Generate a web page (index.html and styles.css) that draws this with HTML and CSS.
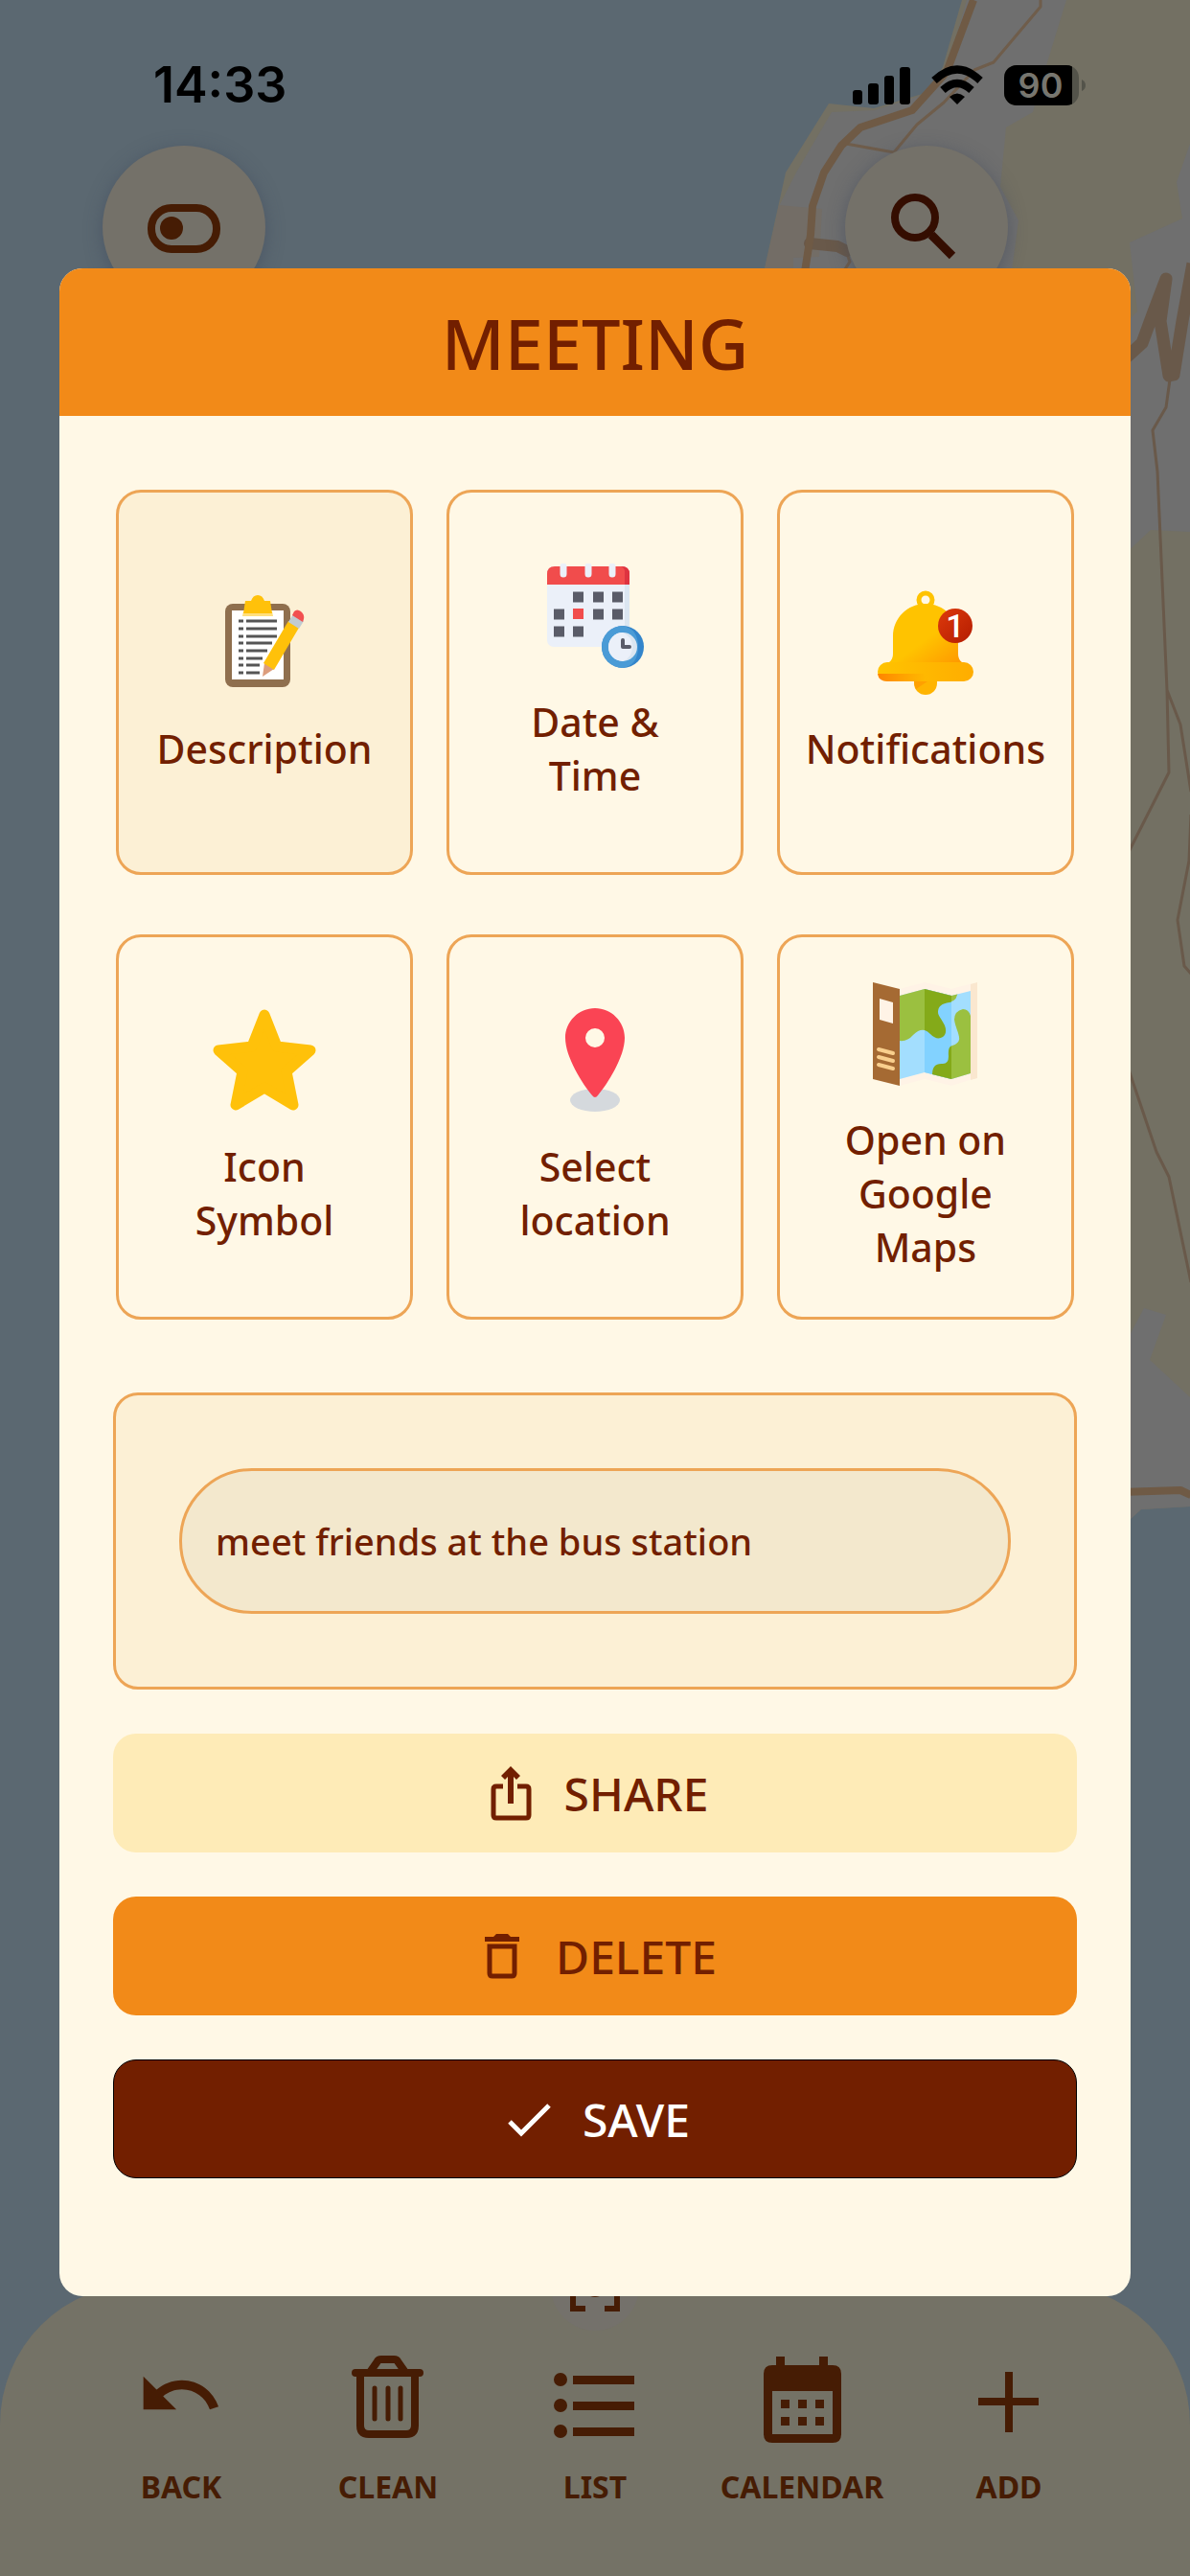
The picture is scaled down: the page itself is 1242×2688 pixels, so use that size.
FILE: index.html
```html
<!DOCTYPE html>
<html lang="en">
<head>
<meta charset="utf-8">
<meta name="viewport" content="width=device-width, initial-scale=1">
<title>Meeting</title>
<link rel="stylesheet" href="styles.css">
</head>
<body>
<div class="screen">
  <svg class="map" viewBox="0 0 1242 2688" preserveAspectRatio="xMaxYMin slice" aria-hidden="true">
    <path fill="#737063" d="M1004 0L984 70 966 97 912 113 865 108 820 180 798 280 700 700 1100 1650 1180 1585 1191 1575 1242 1572V0z"/>
    <path fill="#6f6f6f" d="M1009 0L988 72 966 98 913 115 868 117 831 180 813 215 798 290 700 700 1100 1650 1180 1585 1191 1575 1242 1572V0z"/>
    <path fill="#736d66" d="M813 214L858 218 855 268 828 269V290H796z"/>
    <path fill="#737063" d="M1113 0L1093 65 1078 117 1050 133 1044 195 1063 230 1055 290 1180 332 1187 325 1179 253 1234 228 1228 190 1242 150V0z"/>
    <path fill="#737063" d="M1170 582L1201 553 1242 555V1458L1200 1419 1217 1372 1194 1365 1170 1410z"/>
    <g fill="none" stroke-linejoin="round">
      <g stroke="#6f5d4b" stroke-width="3">
        <path d="M1086 0V7L1037 65 1017 73 985 107 957 130 933 159 883 150"/>
        <path d="M883 262L887 273 880 284"/>
        <path stroke="#69594a" d="M1221 396L1217 425 1203 449 1208 492 1218 720 1220 806 1178 889M1218 720L1232 756 1243 826M1243 850L1241 898 1229 960 1236 1008 1243 1016M1178 1116L1207 1202 1220 1228 1243 1338"/>
      </g>
      <g stroke="#69594a">
        <path stroke-width="12" stroke-linecap="round" d="M845 254L874 257 884 262"/>
        <path stroke-width="13" d="M1170 378L1192 358 1203 328 1217 291 1211 335 1220 392 1225 391 1234 335 1245 275"/>
      </g>
      <g stroke="#6f5a45" stroke-width="8">
        <path d="M1016 0L988 75 952 115 898 133 878 152 860 180 848 215 846 245 839 290"/>
        <path d="M1170 1557L1232 1555 1243 1560"/>
      </g>
    </g>
  </svg>

  <header class="status-bar">
    <time class="clock">14:33</time>
    <div class="status-icons">
      <svg width="60" height="44" viewBox="0 0 60 44" aria-hidden="true">
        <rect x="0" y="27" width="10" height="15" rx="3"/><rect x="16" y="20" width="11" height="22" rx="3"/><rect x="33" y="12" width="10" height="30" rx="3"/><rect x="49" y="3" width="11" height="39" rx="3"/>
      </svg>
      <svg width="54" height="44" viewBox="0 0 54 44" aria-hidden="true">
        <g fill="none" stroke="#000" stroke-width="8"><path d="M3 17Q27 -6 51 17"/><path d="M12 27Q27 13 42 27"/></g>
        <path d="M19 34Q27 27 35 34L27 42z"/>
      </svg>
      <svg width="86" height="44" viewBox="0 0 86 44" role="img" aria-label="Battery 90 percent">
        <clipPath id="charge"><path d="M0 0H71V44H0z"/></clipPath>
        <rect x="0" y="1" width="78" height="42" rx="13" fill="#53534a"/>
        <rect x="0" y="1" width="78" height="42" rx="13" clip-path="url(#charge)"/>
        <path d="M81 16Q85 18 85 22T81 28z" fill="#53534a"/>
        <text class="battery-text" x="38" y="35" text-anchor="middle">90</text>
      </svg>
    </div>
  </header>

  <div class="map-actions">
    <button class="round-button" type="button" aria-label="Toggle">
      <svg viewBox="0 0 170 170" aria-hidden="true">
        <rect x="51" y="65" width="68" height="43" rx="21" fill="none" stroke="#461c04" stroke-width="8"/>
        <circle cx="72" cy="86" r="12" fill="#461c04"/>
      </svg>
    </button>
    <button class="round-button" type="button" aria-label="Search">
      <svg viewBox="0 0 170 170" fill="none" stroke="#340d00" stroke-width="8" aria-hidden="true">
        <circle cx="73" cy="75" r="21"/><path stroke-width="9" d="M90 93L112 115"/><path stroke-width="5" d="M88 90L94 97"/>
      </svg>
    </button>
  </div>

  <nav class="tab-bar">
    <svg class="locate" viewBox="0 0 92 92" aria-hidden="true">
      <circle cx="46" cy="46" r="46" fill="#74716b"/>
      <circle cx="46" cy="46" r="11" fill="#461c04"/>
      <path fill="none" stroke="#461c04" stroke-width="6" d="M23 36V23H36M56 23H69V36M69 56V69H56M36 69H23V56"/>
    </svg>
    <a class="tab" href="#back">
      <svg viewBox="0 0 96 96" aria-hidden="true"><path transform="translate(1 -3) scale(3.83)" d="M12.500 8c-2.650 0-5.050.990-6.900 2.600L2 7v9h9l-3.620-3.620c1.390-1.160 3.160-1.880 5.120-1.880 3.540 0 6.550 2.310 7.600 5.500l2.370-.780C21.080 11.030 17.150 8 12.500 8z"/></svg>
      <span>BACK</span>
    </a>
    <a class="tab" href="#clean">
      <svg viewBox="0 0 96 96" aria-hidden="true"><g fill="none" stroke="#461c04" stroke-linecap="round" stroke-linejoin="round"><path stroke-width="8" d="M14 20H81M30 18L37 8Q38 6 41 6H54Q57 6 58 8L65 18M19 20V75Q19 84 28 84H67Q76 84 76 75V20"/><path stroke-width="5" d="M34 36V68M48 36V68M61 36V68"/></g></svg>
      <span>CLEAN</span>
    </a>
    <a class="tab" href="#list">
      <svg viewBox="0 0 96 96" aria-hidden="true"><circle cx="12" cy="27" r="7"/><circle cx="12" cy="54" r="7"/><circle cx="12" cy="81" r="7"/><path d="M25 23H89V32H25zM25 50H89V59H25zM25 77H89V86H25z"/></svg>
      <span>LIST</span>
    </a>
    <a class="tab" href="#calendar">
      <svg viewBox="0 0 96 96" aria-hidden="true"><path fill-rule="evenodd" d="M21 3H30V12H66V3H75V12H80Q89 12 89 21V84Q89 93 80 93H17Q8 93 8 84V21Q8 12 17 12H21zM17 39V84H80V39z"/><path d="M26 48H35V57H26zM44 48H53V57H44zM62 48H71V57H62zM26 66H35V75H26zM44 66H53V75H44zM62 66H71V75H62z"/></svg>
      <span>CALENDAR</span>
    </a>
    <a class="tab" href="#add">
      <svg viewBox="0 0 96 96" aria-hidden="true"><path d="M44 19H52V46H79V54H52V82H44V54H16V46H44z"/></svg>
      <span>ADD</span>
    </a>
  </nav>

  <div class="overlay">
    <section class="modal" role="dialog" aria-labelledby="modal-title">
      <header class="modal-header"><h1 id="modal-title">MEETING</h1></header>
      <div class="modal-body">
        <div class="card-grid">
          <button class="card card-selected" type="button">
            <svg viewBox="0 0 110 110" aria-hidden="true">
              <rect x="14" y="14" width="68" height="87" rx="8" fill="#8f6f4e"/>
              <path fill="#fff" d="M21 21H75V93H21z"/>
              <path fill="#ffdf7d" d="M33 22H63L64 27H32z"/>
              <path fill="#ffc10a" d="M35 11H41Q43 5 48 5T55 11H61L63 24H33z"/>
              <path stroke="#555" stroke-width="3" d="M28 32H33M36 32H68M28 40H33M36 40H68M28 48H33M36 48H68M28 55H33M36 55H63M28 63H33M36 63H58M28 71H33M36 71H53M28 78H33M36 78H50M28 86H33M36 86H50"/>
              <path fill="#dc9d7d" d="M55 76L65 82 53 90z"/>
              <path fill="#ffc10a" d="M54 76L80 32 91 39 65 83z"/>
              <path fill="#c1cbd1" d="M80 33L85 25 96 32 91 40z"/>
              <path fill="#f25050" d="M84 26L86 22Q89 19 93 22T96 30L95 33z"/>
            </svg>
            <span>Description</span>
          </button>
          <button class="card" type="button">
            <svg viewBox="0 0 110 110" aria-hidden="true">
              <rect x="5" y="3" width="86" height="84" rx="7" fill="#ebf0f9"/>
              <path fill="#dbe6f1" d="M86 20H91V66H86z"/>
              <path fill="#f14c4c" d="M5 22V11Q5 3 13 3H83Q91 3 91 11V22z"/>
              <path fill="#de3340" d="M82 3Q91 3 91 11V22H86V8Q86 5 82 3z"/>
              <path stroke="#ebf0f9" stroke-width="7" stroke-linecap="round" d="M22 3V11M48 3V11M73 3V11"/>
              <path fill="none" stroke="#5a5c68" stroke-width="11" d="M32 35H43M53 35H64M73 35H84M12 53H23M53 53H64M73 53H84M12 71H23M32 71H43"/>
              <path fill="#f14c4c" d="M32 47H43V58H32z"/>
              <circle cx="84" cy="87" r="22" fill="#3385cb"/>
              <path fill="#4a9bd6" d="M84 65A22 22 0 0 0 84 109Q100 106 100 87T84 65z"/>
              <circle cx="84" cy="87" r="15" fill="#dbe6f1"/>
              <path fill="#ebf0f9" d="M84 72A15 15 0 0 0 84 102Q94 98 94 87T84 72z"/>
              <path fill="none" stroke="#5a5c68" stroke-width="4" stroke-linejoin="round" stroke-linecap="round" d="M84 80V87H91"/>
            </svg>
            <span>Date &amp;<br>Time</span>
          </button>
          <button class="card" type="button">
            <svg viewBox="0 0 110 110" aria-hidden="true">
              <defs>
                <linearGradient id="bell" x1="0" y1="0" x2="1" y2="1"><stop offset=".55" stop-color="#ffc300"/><stop offset="1" stop-color="#ff9500"/></linearGradient>
                <linearGradient id="brim"><stop offset="0" stop-color="#ffc300"/><stop offset="1" stop-color="#ffad00"/></linearGradient>
                <linearGradient id="glow"><stop offset="0" stop-color="#ff8400"/><stop offset="1" stop-color="#ff8400" stop-opacity="0"/></linearGradient>
                <linearGradient id="badge" x1="0" y1="0" x2="1" y2="1"><stop offset="0" stop-color="#dd3a0c"/><stop offset="1" stop-color="#b41c00"/></linearGradient>
              </defs>
              <circle cx="55" cy="10" r="7" fill="none" stroke="#ffc300" stroke-width="5"/>
              <path fill="url(#bell)" d="M55 14C36 14 21 29 21 48V66C21 72 18 76 13 76H97C92 76 89 72 89 66V48C89 29 74 14 55 14z"/>
              <path fill="#ffb400" d="M43 94H67V97A12 12 0 0 1 43 97z"/><path fill="#ffa000" d="M43 95H57L45 103Q43 99 43 95z"/>
              <rect x="5" y="75" width="100" height="20" rx="10" fill="url(#brim)"/>
              <path fill="url(#glow)" d="M5 87H55V95H15Q6 95 5 87z"/>
              <circle cx="86" cy="37" r="18" fill="url(#badge)"/>
              <text class="badge-text" x="86" y="49" text-anchor="middle">1</text>
            </svg>
            <span>Notifications</span>
          </button>
          <button class="card" type="button">
            <svg viewBox="0 0 110 110" aria-hidden="true">
              <path fill="#ffc10a" stroke="#ffc10a" stroke-width="11" stroke-linejoin="round" d="M55 7L68 40 103 44 78 66 85 101 55 83 25 101 32 66 7 44 42 40z"/>
            </svg>
            <span>Icon<br>Symbol</span>
          </button>
          <button class="card" type="button">
            <svg viewBox="0 0 110 110" aria-hidden="true">
              <ellipse cx="55" cy="96" rx="26" ry="12" fill="#d5d9dd"/>
              <path fill="#fa4454" fill-rule="evenodd" d="M55 0C38 0 24 14 24 31C24 51 42 79 52 91Q55 95 58 91C68 79 86 51 86 31C86 14 72 0 55 0zM55 21A10 10 0 1 1 55 41A10 10 0 1 1 55 21z"/>
            </svg>
            <span>Select<br>location</span>
          </button>
          <button class="card" type="button">
            <svg viewBox="0 0 110 110" aria-hidden="true">
              <defs>
                <path id="land" d="M28 8V62Q36 63 42 56Q52 46 60 55Q67 62 73 58Q78 54 75 46C71 38 68 36 68 32C68 26 72 23 80 22Q89 20 89 8zM102 36Q100 29 94 29Q85 31 85 40C86 48 91 56 90 61Q89 65 83 67Q78 68 79 78Q79 86 73 86Q62 85 62 97V104H104z"/>
                <clipPath id="sheet"><path d="M28 15L54 8 82 15 102 10V96L82 102 54 95 28 102z"/></clipPath>
                <clipPath id="fold"><path d="M54 0H82V110H54z"/></clipPath>
              </defs>
              <path fill="#fff3e6" d="M28 8L54 1 82 8 104 2V102L82 109 54 102 28 109z"/>
              <path fill="#fae7cf" d="M102 3L109 1V101L102 103z"/>
              <g clip-path="url(#sheet)">
                <path fill="#a3defe" d="M28 0H102V110H28z"/><use href="#land" fill="#9bc040"/>
                <g clip-path="url(#fold)"><path fill="#82d2ff" d="M54 0H82V110H54z"/><use href="#land" fill="#84aa19"/></g>
              </g>
              <path fill="#a56a33" d="M0 1L28 8V109L0 102z"/>
              <path fill="#fff3e6" d="M7 18L21 22V44L7 40z"/>
              <path stroke="#f9cf8d" stroke-width="4" stroke-linecap="round" d="M6 71L21 75M6 79L21 83M6 87L21 91"/>
            </svg>
            <span>Open on<br>Google<br>Maps</span>
          </button>
        </div>

        <div class="panel">
          <input class="description" type="text" aria-label="Description" value="meet friends at the bus station">
        </div>

        <div class="actions">
          <button class="action action-share" type="button">
            <svg viewBox="0 0 60 60" aria-hidden="true"><path fill="none" stroke="currentColor" stroke-width="5" d="M22 23H15Q12 23 12 26V53Q12 56 15 56H46Q49 56 49 53V26Q49 23 46 23H37"/><path fill="currentColor" d="M30 2L40 12 36 16 33 13V41H27V13L24 16 20 12z"/></svg>
            <span>SHARE</span>
          </button>
          <button class="action action-delete" type="button">
            <svg viewBox="0 0 60 60" aria-hidden="true"><path fill="currentColor" d="M12 10H21L24 7H36L39 10H48V15H12z"/><path fill="none" stroke="currentColor" stroke-width="5" d="M17 20H43V48Q43 51 40 51H20Q17 51 17 48z"/></svg>
            <span>DELETE</span>
          </button>
          <button class="action action-save" type="button">
            <svg viewBox="0 0 60 60" aria-hidden="true"><path fill="none" stroke="currentColor" stroke-width="5" d="M10 33L22 45 51 16"/></svg>
            <span>SAVE</span>
          </button>
        </div>
      </div>
    </section>
  </div>
</div>
</body>
</html>
```

FILE: styles.css
```css
:root {
  --brown: #721f00;
  --brown-dim: #461c04;
  --orange: #f28a18;
  --line: #eda556;
  --cream: #fff8e6;
  --sand: #fcf0d5;
}

* {
  box-sizing: border-box;
}

body {
  margin: 0;
  font-family: "Noto Sans", "Open Sans", sans-serif;
}

button,
input {
  font: inherit;
  color: inherit;
}

button {
  border: 0;
  cursor: pointer;
}

svg {
  display: block;
  flex: none;
}

.screen {
  position: relative;
  display: flex;
  flex-direction: column;
  min-height: 100vh;
  overflow: hidden;
  background: #5b6871;
}

.map {
  position: absolute;
  inset: 0;
  width: 100%;
  height: 100%;
}

/* Status bar */
.status-bar {
  position: relative;
  display: flex;
  justify-content: space-between;
  align-items: center;
  padding: 67px 108px 41px 160px;
}

.clock {
  font: 600 52px/44px Inter, sans-serif;
}

.status-icons {
  display: flex;
  gap: 22px;
}

.battery-text {
  font: 600 36px Inter, sans-serif;
  fill: #77766f;
}

.badge-text {
  font: 500 34px Roboto, sans-serif;
  fill: #fff;
}

/* Round buttons on the map */
.map-actions {
  position: relative;
  display: flex;
  justify-content: space-between;
  padding: 0 190px 0 107px;
}

.round-button {
  width: 170px;
  height: 170px;
  padding: 0;
  border-radius: 50%;
  background: #747169;
  box-shadow: 0 4px 18px rgba(60, 70, 90, 0.5);
}

/* Bottom navigation */
.tab-bar {
  position: relative;
  display: grid;
  grid-template-columns: repeat(5, 1fr);
  margin-top: auto;
  padding: 73px 81px 71px;
  border-radius: 147px 147px 0 0;
  background: #747266;
}

.locate {
  position: absolute;
  top: -43px;
  left: 50%;
  width: 92px;
  margin-left: -46px;
}

.tab {
  display: flex;
  flex-direction: column;
  align-items: center;
  gap: 21px;
  color: var(--brown-dim);
  fill: var(--brown-dim);
  font-size: 32px;
  font-weight: 700;
  line-height: 44px;
  text-decoration: none;
}

.tab svg {
  width: 96px;
  height: 96px;
}

/* Dialog */
.overlay {
  position: absolute;
  inset: 0;
  display: flex;
  flex-direction: column;
  justify-content: center;
  padding: 0 5% 12px;
}

.modal {
  overflow: hidden;
  border-radius: 24px;
  background: var(--cream);
  color: var(--brown);
}

.modal-header {
  padding: 33px 56px 31px;
  background: var(--orange);
  text-align: center;
}

.modal-header h1 {
  margin: 0;
  font-size: 72px;
  font-weight: 500;
  line-height: 90px;
}

.modal-body {
  padding: 77px 56px 123px;
}

.card-grid {
  display: grid;
  grid-template-columns: repeat(3, 1fr);
  gap: 62px 35px;
  padding: 0 3px;
}

.card {
  display: flex;
  flex-direction: column;
  align-items: center;
  justify-content: center;
  gap: 27px;
  min-height: 402px;
  padding: 0;
  border: 3px solid var(--line);
  border-radius: 26px;
  background: transparent;
  font-size: 41px;
  font-weight: 500;
  line-height: 56px;
}

.card svg {
  width: 110px;
  height: 110px;
}

.card-selected {
  background: var(--sand);
}

.panel {
  margin-top: 76px;
  padding: 76px 66px;
  border: 3px solid var(--line);
  border-radius: 26px;
  background: var(--sand);
}

.description {
  display: block;
  width: 100%;
  height: 152px;
  padding: 0 35px;
  border: 3px solid var(--line);
  border-radius: 76px;
  background: #f3e8cd;
  font-size: 38px;
  font-weight: 500;
}

.actions {
  display: grid;
  gap: 46px;
  margin-top: 46px;
}

.action {
  display: flex;
  align-items: center;
  justify-content: center;
  gap: 26px;
  height: 124px;
  border-radius: 24px;
  font-size: 48px;
  font-weight: 500;
}

.action svg {
  width: 60px;
  height: 60px;
}

.action-share {
  background: #feebb7;
}

.action-delete {
  background: var(--orange);
}

.action-save {
  border: 1px solid #000;
  background: var(--brown);
  color: #fff;
}
```
